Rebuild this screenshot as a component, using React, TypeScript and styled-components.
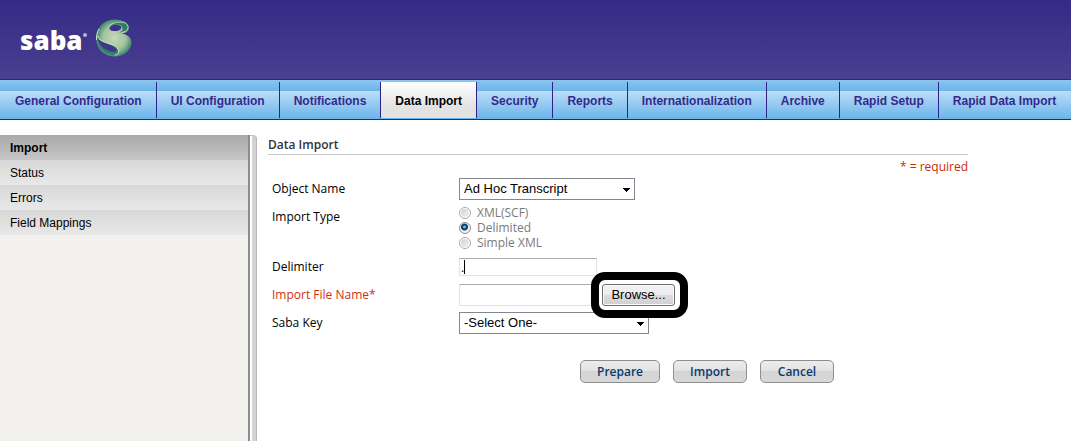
import React, { useState } from "react";
import styled, { createGlobalStyle } from "styled-components";

const ui = `"Liberation Sans", Arial, sans-serif`;
const humanist = `"Trebuchet MS", "Open Sans", sans-serif`;

const GlobalStyle = createGlobalStyle`
  *, *::before, *::after { box-sizing: border-box; }
  body { margin: 0; background: #fff; color: #000; font: 12px/15px ${humanist}; }
`;

const Page = styled.div`
  min-height: 100vh;
  display: flex;
  flex-direction: column;
`;

const Header = styled.header`
  height: 80px;
  padding: 0 20px 3px;
  display: flex;
  align-items: center;
  gap: 8px;
  background: linear-gradient(#352a86, #4b3f90);
  border-bottom: 1px solid #2d2483;
`;

const Wordmark = styled.span`
  display: flex;
  padding-top: 3px;
  color: #fff;
  font: 800 26px/32px "Open Sans", sans-serif;
`;

const Registered = styled.span`
  width: 4px;
  height: 4px;
  margin-top: 9px;
  border-radius: 50%;
  background: #b7b2d8;
`;

const Nav = styled.nav`
  display: flex;
  height: 40px;
  padding: 2px 0 1px 1px;
  white-space: nowrap;
  background: linear-gradient(#8cc6f1, #6cb4e9) top / 100% 11px no-repeat,
    linear-gradient(#bbdef8, #6cb4ea) bottom / 100% 28px no-repeat;
  border-bottom: 1px solid #2d2483;
`;

const Tab = styled.a<{ $active?: boolean }>`
  flex: none;
  padding: 0 14px;
  border-right: 1px solid #2d2483;
  font: bold 12px/38px ${ui};
  text-decoration: none;
  color: ${(p) => (p.$active ? "#000" : "#35298a")};
  background: ${(p) => (p.$active ? "linear-gradient(#fff, #e2e2e2 70%)" : "none")};
  &:last-child { border-right: 0; }
`;

const Body = styled.div`
  flex: 1;
  display: flex;
  padding-top: 15px;
`;

const Sidebar = styled.aside`
  flex: none;
  width: 250px;
  background: #f2f1ed;
  border-right: 2px solid #8c8c8c;
`;

const SideLink = styled.a<{ $active?: boolean }>`
  display: block;
  padding: 1px 10px 0;
  font: ${(p) => (p.$active ? "bold" : "normal")} 12px/24px ${ui};
  color: #000;
  text-decoration: none;
  background: ${(p) =>
    p.$active ? "linear-gradient(#a9a9a9, #c6c6c6)" : "linear-gradient(#d8d8d8, #e8e8e8)"};
`;

const Splitter = styled.div`
  flex: none;
  width: 7px;
  border-top: 1px solid #c4c4c4;
  border-right: 1px solid #b8b8b8;
  border-top-right-radius: 4px;
  background: linear-gradient(90deg, #fff 2px, #d3d3d3 2px);
`;

const Main = styled.main`
  flex: 1;
  max-width: 711px;
  padding-left: 11px;
`;

const Title = styled.h1`
  margin: 0;
  height: 20px;
  border-bottom: 1px solid #c8c8c8;
  font: 600 12px/19px ${humanist};
  color: #333;
`;

const Required = styled.p`
  margin: 0;
  height: 20px;
  text-align: right;
  line-height: 24px;
  color: #cc2a00;
`;

const Form = styled.form`
  padding: 0 0 0 4px;
`;

const Row = styled.div`
  display: grid;
  grid-template-columns: 187px 1fr;
  align-items: center;
  min-height: 28px;
`;

const RadioRow = styled(Row)`
  align-items: start;
  min-height: 50px;
`;

const Label = styled.label<{ $required?: boolean }>`
  line-height: 28px;
  color: ${(p) => (p.$required ? "#cc3311" : "#000")};
`;

const Select = styled.select<{ $width: number }>`
  width: ${(p) => p.$width}px;
  height: 22px;
  padding: 0 4px;
  appearance: none;
  border: 1px solid #828790;
  border-radius: 0;
  font: 13px/20px ${ui};
  color: #000;
  background: linear-gradient(#000, #000) right 4px top 9px / 7px 1px no-repeat,
    linear-gradient(#000, #000) right 5px top 10px / 5px 1px no-repeat,
    linear-gradient(#000, #000) right 6px top 11px / 3px 1px no-repeat,
    linear-gradient(#000, #000) right 7px top 12px / 1px 1px no-repeat, #fff;
`;

const TextBox = styled.input`
  width: 138px;
  height: 18px;
  padding: 0 1px;
  border: 1px solid #e2e3ea;
  border-top-color: #abadb3;
  font: 12px/16px ${humanist};
  color: #000;
  outline: none;
`;

const DelimiterBox = styled(TextBox)`
  caret-color: transparent;
  background: linear-gradient(#000, #000) 4px center / 1px 14px no-repeat;
`;

const FileBox = styled(TextBox)`
  height: 22px;
`;

const RadioGroup = styled.div`
  padding-top: 2px;
`;

const Option = styled.label`
  display: flex;
  align-items: center;
  gap: 6px;
  line-height: 15px;
  color: #7a7a7a;
`;

const Radio = styled.input`
  appearance: none;
  width: 12px;
  height: 12px;
  margin: 0;
  border: 1px solid #a8a8a8;
  border-radius: 50%;
  background: linear-gradient(135deg, #cfcfcf, #f4f4f4) content-box, #fff;
  padding: 1px;
  &:checked {
    border-color: #8b8f94;
    background: radial-gradient(circle at 45% 40%, #5ab8e8 1px, #0d3f66 2px, #0d3f66 3px, #f0f0f0 4px);
  }
`;

const FileField = styled.div`
  display: flex;
  align-items: center;
  gap: 5px;
`;

const Highlight = styled.span`
  position: relative;
  display: flex;
  &::after {
    content: "";
    position: absolute;
    inset: -12px -13px -12px -11px;
    border: 8px solid #000;
    border-radius: 14px;
    pointer-events: none;
  }
`;

const Browse = styled.button`
  width: 73px;
  height: 22px;
  padding: 0;
  border: 1px solid #707070;
  border-radius: 3px;
  font: 13px/18px ${ui};
  color: #000;
  background: linear-gradient(#f3f3f3, #ebebeb 50%, #dddddd 50%, #cfcfcf);
  box-shadow: inset 0 0 0 1px #fafafa;
`;

const Actions = styled.div`
  display: flex;
  gap: 13px;
  padding: 23px 0 0 308px;
`;

const Action = styled.button`
  min-width: 74px;
  height: 23px;
  padding: 0 16px;
  border: 1px solid #8e8e8e;
  border-radius: 5px;
  font: 600 12px/20px ${humanist};
  color: #0a3a70;
  background: linear-gradient(#ececec, #e2e2e2 50%, #d4d4d4 50%, #d8d8d8);
`;

const tabs = [
  "General Configuration", "UI Configuration", "Notifications", "Data Import", "Security",
  "Reports", "Internationalization", "Archive", "Rapid Setup", "Rapid Data Import",
];
const links = ["Import", "Status", "Errors", "Field Mappings"];
const types = ["XML(SCF)", "Delimited", "Simple XML"];

function Emblem() {
  return (
    <svg width="38" height="38" viewBox="0 0 38 38" aria-hidden="true">
      <defs>
        <radialGradient id="ball" cx="52%" cy="50%" r="54%">
          <stop offset="0" stopColor="#c6d9b8" />
          <stop offset="0.6" stopColor="#a3c29d" />
          <stop offset="1" stopColor="#2f7d69" />
        </radialGradient>
      </defs>
      <path d="M19 0.500C26 0 33.500 3 34 8.500C34 12.500 30 14.500 25 14.500C32 15 36.500 18 36.500 24C36 32 28 37.500 20 37.500C9 37.500 1 30 1 19C1 8 9 1 19 0.500Z" fill="url(#ball)" />
      <path d="M19 3.500C26 1 33 4 33.500 8.500C33.500 12 29 13.500 24 13.500C28 12 29 9 26 6.500C24 5 20 5 16 6.500Z" fill="#2c7c68" />
      <path d="M14.500 9C15 5.500 23 4.500 26 7.500C27.500 10.500 23 12.500 19 12C16 11.800 14.500 11 14.500 9Z" fill="#3d3288" />
      <path d="M14.500 7C18 3 27 2 31 4.500C35 8 33 12.500 26 13.500" fill="none" stroke="#b9d8bf" strokeWidth="1" />
      <path d="M2 17C4 26 20 23 23.500 31C25 35 21 37 17 36C8 34 2 27 2 17Z" fill="#337f6c" />
      <path d="M2.500 18C5 26 19 24 21.500 31C21.500 34 16 33 11 30.500C6 28 3 23 2.500 18Z" fill="#41368a" />
      <path d="M2.500 17C5 25 20 23 23.500 31C24.500 34 22.500 36 19.500 36M1.500 21C1.500 17 2 13 4 10" fill="none" stroke="#cfe3c8" strokeWidth="1" />
    </svg>
  );
}

export default function App() {
  const [type, setType] = useState("Delimited");
  const [delimiter, setDelimiter] = useState(".");
  return (
    <Page>
      <GlobalStyle />
      <Header>
        <Wordmark>saba<Registered /></Wordmark>
        <Emblem />
      </Header>
      <Nav>
        {tabs.map((t) => <Tab key={t} href="#" $active={t === "Data Import"}>{t}</Tab>)}
      </Nav>
      <Body>
        <Sidebar>
          {links.map((l) => <SideLink key={l} href="#" $active={l === "Import"}>{l}</SideLink>)}
        </Sidebar>
        <Splitter />
        <Main>
          <Title>Data Import</Title>
          <Required>* = required</Required>
          <Form onSubmit={(e) => e.preventDefault()}>
            <Row>
              <Label htmlFor="object">Object Name</Label>
              <Select id="object" $width={176}><option>Ad Hoc Transcript</option></Select>
            </Row>
            <RadioRow role="radiogroup" aria-labelledby="type-label">
              <Label as="span" id="type-label">Import Type</Label>
              <RadioGroup>
                {types.map((t) => (
                  <Option key={t}>
                    <Radio type="radio" name="type" checked={type === t} onChange={() => setType(t)} />
                    {t}
                  </Option>
                ))}
              </RadioGroup>
            </RadioRow>
            <Row>
              <Label htmlFor="delimiter">Delimiter</Label>
              <DelimiterBox id="delimiter" value={delimiter} onChange={(e) => setDelimiter(e.target.value)} />
            </Row>
            <Row>
              <Label htmlFor="file" $required>Import File Name*</Label>
              <FileField>
                <FileBox id="file" />
                <Highlight><Browse type="button">Browse...</Browse></Highlight>
              </FileField>
            </Row>
            <Row>
              <Label htmlFor="key">Saba Key</Label>
              <Select id="key" $width={190}><option>-Select One-</option></Select>
            </Row>
            <Actions>
              <Action>Prepare</Action>
              <Action>Import</Action>
              <Action type="button">Cancel</Action>
            </Actions>
          </Form>
        </Main>
      </Body>
    </Page>
  );
}
